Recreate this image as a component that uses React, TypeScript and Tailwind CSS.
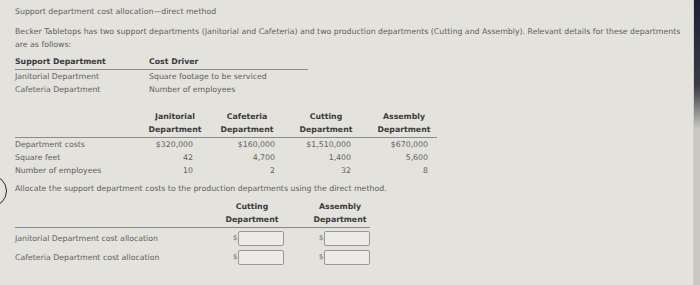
import React from 'react';

const costs = [
  { label: 'Department costs', values: ['$320,000', '$160,000', '$1,510,000', '$670,000'] },
  { label: 'Square feet', values: ['42', '4,700', '1,400', '5,600'] },
  { label: 'Number of employees', values: ['10', '2', '32', '8'] },
];

const colPad = ['pr-[10px]', 'pr-0', 'pr-[3px]', 'pr-[4px]'];

function MoneyInput() {
  return (
    <div className="flex items-center">
      <span className="text-[#6a6a6a] w-[5px] text-[7px]">$</span>
      <div className="w-[46px] h-[15px] bg-[#ecebe7] border border-[#9a9894] rounded-[2px]" />
    </div>
  );
}

export default function App() {
  return (
    <div
      className="relative w-[700px] h-[285px] overflow-hidden bg-[#e4e2dc] text-[#5e5e5e] text-[7.8px] leading-[13px]"
      style={{ fontFamily: '"DejaVu Sans", Verdana, sans-serif' }}
    >
      <div className="pl-[15px] pt-[5px]">
        <p>Support department cost allocation—direct method</p>

        <p className="mt-[7px] w-[672px]">
          Becker Tabletops has two support departments (Janitorial and Cafeteria) and two production departments (Cutting and Assembly). Relevant details for these departments are as follows:
        </p>

        {/* drivers */}
        <div className="mt-[4px] w-[293px]">
          <div className="grid grid-cols-[134px_1fr] font-bold text-[#3a3a3a] border-b border-[#8c8a86] pb-[1px]">
            <span>Support Department</span>
            <span>Cost Driver</span>
          </div>
          <div className="grid grid-cols-[134px_1fr]">
            <span>Janitorial Department</span>
            <span>Square footage to be serviced</span>
          </div>
          <div className="grid grid-cols-[134px_1fr]">
            <span>Cafeteria Department</span>
            <span>Number of employees</span>
          </div>
        </div>

        {/* department data */}
        <div className="mt-[14px] w-[422px]">
          <div className="grid grid-cols-[132px_56px_16px_56px_23px_56px_22px_56px] font-bold text-[#3a3a3a] text-center border-b border-[#8c8a86] pb-[1px]">
            <span />
            <span>Janitorial<br />Department</span>
            <span />
            <span>Cafeteria<br />Department</span>
            <span />
            <span>Cutting<br />Department</span>
            <span />
            <span>Assembly<br />Department</span>
          </div>
          {costs.map((row) => (
            <div key={row.label} className="grid grid-cols-[132px_56px_16px_56px_23px_56px_22px_56px]">
              <span>{row.label}</span>
              {row.values.map((v, i) => (
                <React.Fragment key={i}>
                  <span className={`text-right ${colPad[i]}`}>{v}</span>
                  {i < 3 && <span />}
                </React.Fragment>
              ))}
            </div>
          ))}
        </div>

        <p className="mt-[5px]">Allocate the support department costs to the production departments using the direct method.</p>

        {/* answer table */}
        <div className="mt-[5px] w-[355px]">
          <div className="grid grid-cols-[209px_56px_32px_56px] font-bold text-[#3a3a3a] text-center border-b border-[#8c8a86] pb-[1px]">
            <span />
            <span>Cutting<br />Department</span>
            <span />
            <span>Assembly<br />Department</span>
          </div>
          <div className="grid grid-cols-[218px_86px_1fr] items-center mt-[2px] h-[17px]">
            <span>Janitorial Department cost allocation</span>
            <MoneyInput />
            <MoneyInput />
          </div>
          <div className="grid grid-cols-[218px_86px_1fr] items-center mt-[2px] h-[17px]">
            <span>Cafeteria Department cost allocation</span>
            <MoneyInput />
            <MoneyInput />
          </div>
        </div>
      </div>

      {/* partial circle on left edge */}
      <div className="absolute left-[-25px] top-[175px] w-[32px] h-[32px] rounded-full border-[1.5px] border-[#2a2a2a]" />

      {/* screen bezel on right edge */}
      <div className="absolute right-[6px] top-0 h-full w-px bg-[#cfcdc7]" />
      <div className="absolute right-0 top-0 h-full w-[6px] bg-gradient-to-b from-[#1b2234] via-[#3a3c44] via-30% to-[#c9c7c1] to-45%" />
    </div>
  );
}
